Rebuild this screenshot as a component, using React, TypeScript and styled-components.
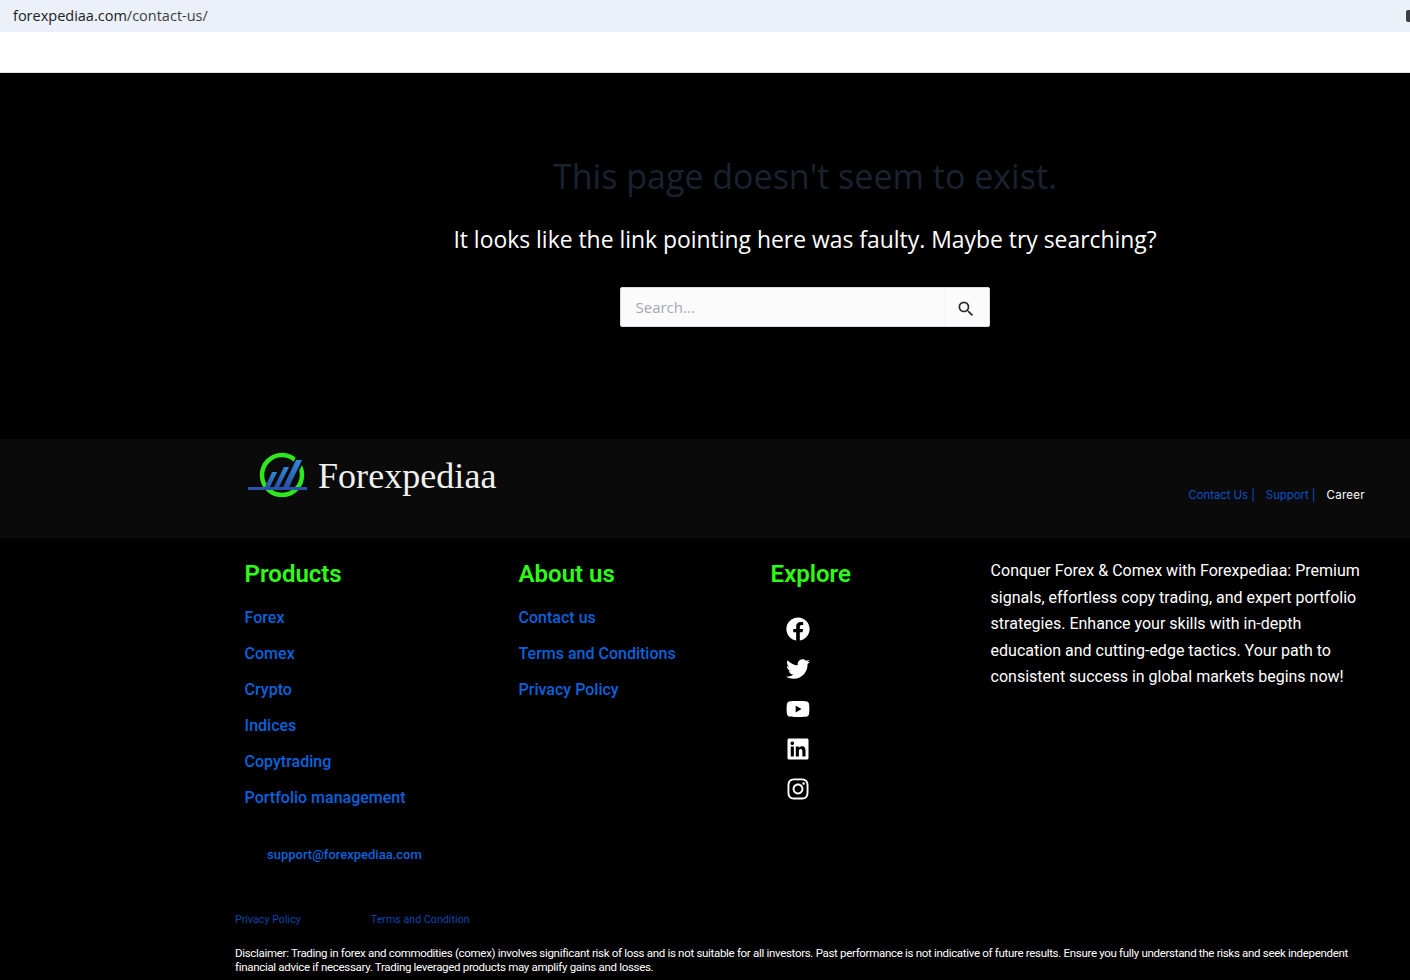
import React from 'react';
import styled, { createGlobalStyle } from 'styled-components';
import { FaFacebook, FaTwitter, FaYoutube, FaLinkedin, FaInstagram } from 'react-icons/fa';
import { MdSearch } from 'react-icons/md';

const GlobalStyle = createGlobalStyle`
  html, body {
    margin: 0;
    width: 100%;
    height: 100%;
    background: #000;
    overflow: hidden;
  }
  body {
    font-family: 'Roboto', 'Liberation Sans', sans-serif;
  }
  a {
    text-decoration: none;
  }
`;

const Page = styled.div`
  width: 1410px;
  height: 980px;
  display: flex;
  flex-direction: column;
  overflow: hidden;
`;

const AddressBar = styled.div`
  height: 32px;
  background: #ebf0f9;
  display: flex;
  align-items: center;
  justify-content: space-between;
  padding-left: 13px;
  font: 14.5px/28px 'Open Sans', sans-serif;
  color: #202124;
`;

const Muted = styled.span`
  color: #3c4046;
`;

const ExtensionIcon = styled.span`
  width: 4px;
  height: 12px;
  background: #3c3f44;
  border-radius: 2px 0 0 2px;
`;

const WhiteStrip = styled.div`
  height: 40px;
  background: #fff;
  border-bottom: 1px solid #e2e2e2;
`;

const NotFound = styled.main`
  height: 366px;
  background: #000;
  display: flex;
  flex-direction: column;
  align-items: center;
  box-sizing: border-box;
  padding: 77px 0 0 200px;
  font-family: 'Open Sans', sans-serif;
`;

const Title = styled.h1`
  margin: 0 0 20px;
  font-size: 34px;
  line-height: 52px;
  font-weight: 400;
  color: #1a2230;
`;

const Subtitle = styled.p`
  margin: 0 0 29px;
  font-size: 22.9px;
  line-height: 36px;
  color: #fff;
`;

const SearchForm = styled.form`
  width: 370px;
  height: 40px;
  box-sizing: border-box;
  display: flex;
  background: #fbfbfb;
  border: 1px solid #d8dbe2;
  border-radius: 2px;
`;

const SearchInput = styled.div`
  flex: 1;
  padding-left: 14.5px;
  font-size: 15px;
  line-height: 38px;
  color: #a3a8b4;
`;

const SearchButton = styled.div`
  width: 45px;
  display: flex;
  align-items: center;
  justify-content: center;
  padding: 3px 3px 0 0;
  box-sizing: border-box;
  border-left: 1px solid #f4f4f4;
  color: #2b2b2b;
  font-size: 20px;
`;

const BrandBar = styled.div`
  height: 99px;
  background: #0a0a0a;
  display: flex;
  justify-content: space-between;
  box-sizing: border-box;
  padding: 12px 45px 0 247px;
`;

const Brand = styled.div`
  display: flex;
  align-items: flex-start;
  gap: 9px;
`;

const BrandName = styled.span`
  font-family: 'Liberation Serif', serif;
  font-size: 36px;
  line-height: 50px;
  letter-spacing: 0.05px;
  color: #f1f1ef;
`;

const TopLinks = styled.nav`
  display: flex;
  gap: 11px;
  padding-top: 36px;
  font: 11.5px/17px 'Inter', sans-serif;
`;

const TopLink = styled.a<{ $light?: boolean }>`
  color: ${(p) => (p.$light ? '#fff' : '#0a4fc4')};
  letter-spacing: ${(p) => (p.$light ? '0.3px' : '-0.1px')};
`;

const Footer = styled.footer`
  flex: 1;
  background: #000;
  display: flex;
  flex-direction: column;
  padding-left: 235px;
`;

const Columns = styled.div`
  display: grid;
  grid-template-columns: 274px 252px 220px 375px;
  padding: 20px 0 0 9.6px;
  height: 307px;
  box-sizing: border-box;
`;

const Column = styled.div`
  display: flex;
  flex-direction: column;
`;

const Heading = styled.h3`
  margin: -1px 0 9px;
  font-size: 24px;
  line-height: 34px;
  font-weight: 600;
  color: #2cff14;
`;

const FooterLink = styled.a`
  font-size: 16px;
  line-height: 36px;
  font-weight: 500;
  color: #0a62dc;
`;

const SocialList = styled.div`
  display: flex;
  flex-direction: column;
  align-items: center;
  width: 54px;
  gap: 16px;
  padding-top: 17px;
  color: #fff;
  font-size: 24px;
  svg {
    display: block;
  }
`;

const About = styled.p`
  margin: 0;
  font-size: 16px;
  line-height: 26.5px;
  color: #fff;
`;

const Email = styled.a`
  padding-left: 32px;
  font-size: 13px;
  line-height: 20px;
  font-weight: 500;
  color: #0a62dc;
`;

const LegalLinks = styled.div`
  display: flex;
  gap: 70px;
  margin-top: 45px;
`;

const LegalLink = styled.a`
  font-size: 10.7px;
  line-height: 20px;
  color: #0a45ac;
`;

const Disclaimer = styled.p`
  margin: 16px 0 0;
  width: 1130px;
  font-size: 11.5px;
  line-height: 14px;
  letter-spacing: -0.31px;
  color: #fff;
`;

const Logo = () => (
  <svg width="62" height="46" viewBox="0 0 62 46" fill="none">
    <defs>
      <linearGradient id="bars" x1="0" y1="1" x2="1" y2="0">
        <stop offset="0" stopColor="#2c4aa0" />
        <stop offset="1" stopColor="#2f8fe0" />
      </linearGradient>
    </defs>
    <circle cx="35" cy="24" r="20" stroke="#2ce81c" strokeWidth="4.5" />
    <path d="M33 38 L50 4 H60 L43 38 Z" fill="#0a0a0a" />
    <rect x="1" y="36" width="59" height="3" fill="#2b51ab" />
    <path d="M18 36 L25 21 H30 L23 36 Z" fill="url(#bars)" />
    <path d="M27 36 L37 16 H42 L32 36 Z" fill="url(#bars)" />
    <path d="M36 36 L49 9 H55 L42 36 Z" fill="url(#bars)" />
  </svg>
);

const products = ['Forex', 'Comex', 'Crypto', 'Indices', 'Copytrading', 'Portfolio management'];
const company = ['Contact us', 'Terms and Conditions', 'Privacy Policy'];

export default function App() {
  return (
    <Page>
      <GlobalStyle />
      <AddressBar>
        <span>
          forexpediaa.com<Muted>/contact-us/</Muted>
        </span>
        <ExtensionIcon />
      </AddressBar>
      <WhiteStrip />
      <NotFound>
        <Title>This page doesn't seem to exist.</Title>
        <Subtitle>It looks like the link pointing here was faulty. Maybe try searching?</Subtitle>
        <SearchForm>
          <SearchInput>Search...</SearchInput>
          <SearchButton>
            <MdSearch />
          </SearchButton>
        </SearchForm>
      </NotFound>
      <BrandBar>
        <Brand>
          <Logo />
          <BrandName>Forexpediaa</BrandName>
        </Brand>
        <TopLinks>
          <TopLink href="#">Contact Us |</TopLink>
          <TopLink href="#">Support |</TopLink>
          <TopLink href="#" $light>
            Career
          </TopLink>
        </TopLinks>
      </BrandBar>
      <Footer>
        <Columns>
          <Column>
            <Heading>Products</Heading>
            {products.map((item) => (
              <FooterLink href="#" key={item}>
                {item}
              </FooterLink>
            ))}
          </Column>
          <Column>
            <Heading>About us</Heading>
            {company.map((item) => (
              <FooterLink href="#" key={item}>
                {item}
              </FooterLink>
            ))}
          </Column>
          <Column>
            <Heading>Explore</Heading>
            <SocialList>
              <FaFacebook />
              <FaTwitter />
              <FaYoutube />
              <FaLinkedin />
              <FaInstagram />
            </SocialList>
          </Column>
          <About>
            Conquer Forex &amp; Comex with Forexpediaa: Premium signals, effortless copy trading, and expert portfolio
            strategies. Enhance your skills with in-depth education and cutting-edge tactics. Your path to consistent
            success in global markets begins now!
          </About>
        </Columns>
        <Email href="#">support@forexpediaa.com</Email>
        <LegalLinks>
          <LegalLink href="#">Privacy Policy</LegalLink>
          <LegalLink href="#">Terms and Condition</LegalLink>
        </LegalLinks>
        <Disclaimer>
          Disclaimer: Trading in forex and commodities (comex) involves significant risk of loss and is not suitable for
          all investors. Past performance is not indicative of future results. Ensure you fully understand the risks and
          seek independent financial advice if necessary. Trading leveraged products may amplify gains and losses.
        </Disclaimer>
      </Footer>
    </Page>
  );
}
